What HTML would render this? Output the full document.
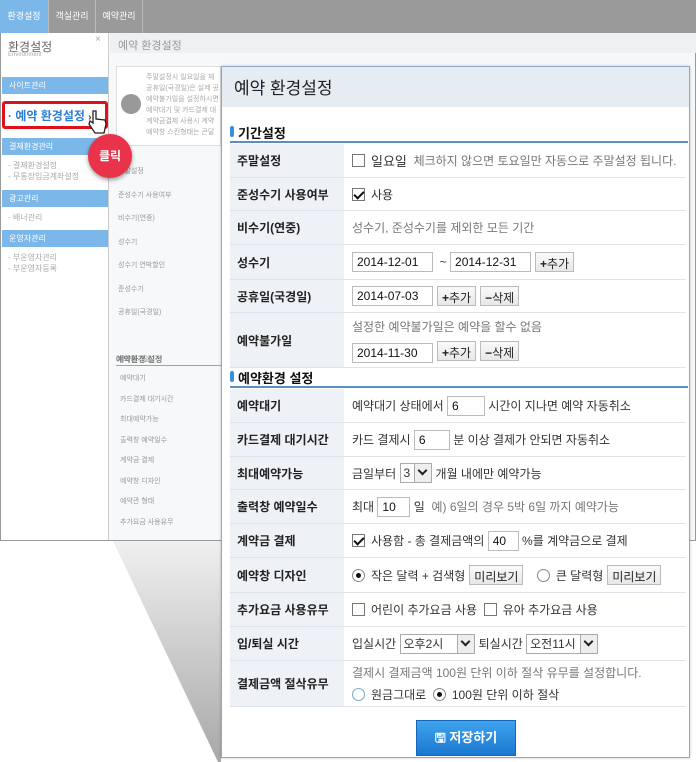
<!DOCTYPE html>
<html><head><meta charset="utf-8"><style>
*{box-sizing:border-box;margin:0;padding:0}
body{width:696px;height:762px;background:#fff;position:relative;overflow:hidden;font-family:"Liberation Sans","Noto Sans CJK KR",sans-serif;font-size:12px;color:#333}
.a{position:absolute;white-space:nowrap}
.f{color:#aaa;font-size:8px}
.pop{position:absolute;left:221px;top:66px;width:469px;height:692px;background:#fff;border:1px solid #8aa9c8;box-shadow:0 0 3px rgba(0,0,0,.2)}
.row{position:absolute;left:8px;width:456px;border-bottom:1px solid #dfe4ea}
.lab{position:absolute;left:0;top:0;bottom:0;width:114px;background:#eef2f6;font-weight:bold;font-size:12px;color:#222;padding-left:7px;display:flex;align-items:center}
.val{position:absolute;left:122px;top:0;bottom:0;right:0;display:flex;align-items:center;font-size:12px;color:#333;white-space:nowrap}
.cb{display:inline-block;width:13px;height:13px;border:1px solid #777;background:#fff;margin-right:6px;vertical-align:middle;position:relative}
.cb.on::after{content:"";position:absolute;left:3px;top:0px;width:4px;height:8px;border:solid #111;border-width:0 2px 2px 0;transform:rotate(45deg)}
.rd{display:inline-block;width:13px;height:13px;border:1px solid #888;border-radius:50%;background:#fff;margin-right:6px;position:relative}
.rd.on::after{content:"";position:absolute;left:3px;top:3px;width:5px;height:5px;border-radius:50%;background:#111}
.in{display:inline-block;height:20px;border:1px solid #bbb;padding:2px 4px;font-size:12px;color:#111;background:#fff}
.bt{display:inline-block;height:20px;border:1px solid #bbb;background:linear-gradient(#fafafa,#e8e8e8);padding:2px 4px;font-size:12px;color:#222;margin-left:4px}
.bt b{font-size:12px}
.sel{display:inline-flex;height:20px;border:1px solid #aaa;font-size:12px;align-items:center;padding-left:3px;background:#fff}
.sel i{display:inline-block;width:17px;height:18px;border-left:1px solid #aaa;background:#eee;margin-left:4px;position:relative}
.sel i::after{content:"";position:absolute;left:4px;top:3px;width:5px;height:5px;border:solid #222;border-width:0 2px 2px 0;transform:rotate(45deg)}
.sec{position:absolute;left:8px;width:458px;border-bottom:2px solid #5b8fc0;font-weight:bold;font-size:13px;color:#111;padding-left:8px;height:20px}
.sec::before{content:"";position:absolute;left:0;top:3px;width:4px;height:11px;border-radius:2px;background:#3a8de0}
.g{color:#777}
</style></head><body>
<div class="a" style="left:0;top:0;width:696px;height:541px;border:1px solid #999;background:#f7f8f9"></div>
<div class="a" style="left:0;top:0;width:696px;height:33px;background:#9a9a9a"></div>
<div class="a" style="left:0;top:0;width:48px;height:33px;background:#7bb7e8;color:#fff;font-size:9px;text-align:center;line-height:33px">환경설정</div>
<div class="a" style="left:48px;top:0;width:47px;height:33px;border-left:1px solid #bbb;color:#fff;font-size:9px;text-align:center;line-height:33px">객실관리</div>
<div class="a" style="left:95px;top:0;width:48px;height:33px;border-left:1px solid #bbb;border-right:1px solid #bbb;color:#fff;font-size:9px;text-align:center;line-height:33px">예약관리</div>
<div class="a" style="left:1px;top:33px;width:108px;height:507px;background:#fff;border-right:1px solid #ccc"></div>
<div class="a" style="left:8px;top:38px;font-size:12px;color:#666">환경설정</div>
<div class="a" style="left:8px;top:52px;font-size:6px;color:#aaa">Environment</div>
<div class="a" style="left:95px;top:34px;font-size:10px;color:#aaa">×</div>
<div class="a" style="left:2px;top:77px;width:106px;height:17px;background:#7bb7e8;color:#fff;font-size:8px;padding:3px 7px">사이트관리</div>
<div class="a" style="left:2px;top:138px;width:106px;height:17px;background:#7bb7e8;color:#fff;font-size:8px;padding:3px 7px">결제환경관리</div>
<div class="a f" style="left:8px;top:160px">- 결제환경설정<br>- 무통장입금계좌설정</div>
<div class="a" style="left:2px;top:190px;width:106px;height:17px;background:#7bb7e8;color:#fff;font-size:8px;padding:3px 7px">광고관리</div>
<div class="a f" style="left:8px;top:212px">- 배너관리</div>
<div class="a" style="left:2px;top:230px;width:106px;height:17px;background:#7bb7e8;color:#fff;font-size:8px;padding:3px 7px">운영자관리</div>
<div class="a f" style="left:8px;top:252px">- 부운영자관리<br>- 부운영자등록</div>
<div class="a" style="left:110px;top:33px;width:586px;height:20px;background:#eef0f2"></div>
<div class="a" style="left:118px;top:37px;font-size:11px;color:#999">예약 환경설정</div>
<div class="a" style="left:116px;top:66px;width:105px;height:80px;border:1px solid #ddd;background:#fff"></div>
<div class="a" style="left:121px;top:94px;width:20px;height:20px;border-radius:50%;background:#999"></div>
<div class="a f" style="left:146px;top:72px;line-height:11px;font-size:7px">주말설정시 일요일을 체<br>공휴일(국경일)은 실제 공<br>예약불가일을 설정하시면<br>예약대기 및 카드결제 대<br>계약금결제 사용시 계약<br>예약창 스킨형태는 큰달</div>
<div class="a f" style="left:118px;top:160px;line-height:23.5px;font-size:7px;color:#999">주말설정<br>준성수기 사용여부<br>비수기(연중)<br>성수기<br>성수기 연박할인<br>준성수기<br>공휴일(국경일)<br><br>예약불가일</div>
<div class="a" style="left:116px;top:354px;font-size:8px;font-weight:bold;color:#777;border-bottom:1px solid #8ab;width:105px">예약환경 설정</div>
<div class="a f" style="left:120px;top:369px;line-height:20.5px;font-size:7px;color:#999">예약대기<br>카드결제 대기시간<br>최대예약가능<br>출력창 예약일수<br>계약금 결제<br>예약창 디자인<br>예약관 형태<br>추가요금 사용유무</div>
<svg class="a" style="left:0;top:0" width="696" height="762"><defs><linearGradient id="sg" x1="0" y1="0" x2="0" y2="1"><stop offset="0" stop-color="#f0f0f0"/><stop offset="1" stop-color="#a8a8a8"/></linearGradient></defs><polygon points="113,541 221,541 221,762 218,762" fill="url(#sg)"/></svg>
<div class="a" style="left:2px;top:101px;width:106px;height:28px;border:3px solid #e0101a;background:#fff;border-radius:3px"></div>
<div class="a" style="left:8px;top:107px;font-size:12px;font-weight:bold;color:#2a7fd4">· 예약 환경설정 <span style="font-size:10px;color:#333">›</span></div>
<div class="a" style="left:88px;top:134px;width:44px;height:44px;border-radius:50%;background:#e8334a;box-shadow:0 2px 4px rgba(0,0,0,.4);color:#fff;font-size:12px;font-weight:bold;text-align:center;line-height:44px">클릭</div>
<svg class="a" style="left:86px;top:108px" width="22" height="28"><path d="M7 3 L7 15 L4 13 L3 16 L9 25 L18 25 L20 16 L19 12 L10 11 L10 3 Z" fill="#fff" stroke="#222" stroke-width="1.3"/></svg>
<div class="pop">
<div class="a" style="left:0;top:0;width:467px;height:40px;background:#e5ecf2"></div>
<div class="a" style="left:12px;top:7px;font-size:17px;color:#222">예약 환경설정</div>
<div class="sec" style="top:56px">기간설정</div>
<div class="row" style="top:77px;height:34px"><div class="lab">주말설정</div><div class="val"><span class="cb"></span><span style="font-size:13px">일요일</span>&nbsp;&nbsp;<span class="g">체크하지 않으면 토요일만 자동으로 주말설정 됩니다.</span></div></div>
<div class="row" style="top:111px;height:33px"><div class="lab">준성수기 사용여부</div><div class="val"><span class="cb on"></span>사용</div></div>
<div class="row" style="top:144px;height:34px"><div class="lab">비수기(연중)</div><div class="val g">성수기, 준성수기를 제외한 모든 기간</div></div>
<div class="row" style="top:178px;height:35px"><div class="lab">성수기</div><div class="val"><span class="in" style="width:81px">2014-12-01</span>&nbsp;&nbsp;~&nbsp;<span class="in" style="width:81px">2014-12-31</span><span class="bt"><b>+</b>추가</span></div></div>
<div class="row" style="top:213px;height:33px"><div class="lab">공휴일(국경일)</div><div class="val"><span class="in" style="width:81px">2014-07-03</span><span class="bt"><b>+</b>추가</span><span class="bt"><b>−</b>삭제</span></div></div>
<div class="row" style="top:246px;height:55px"><div class="lab">예약불가일</div><div class="val" style="flex-direction:column;align-items:flex-start;justify-content:center;gap:6px"><span class="g">설정한 예약불가일은 예약을 할수 없음</span><span><span class="in" style="width:81px">2014-11-30</span><span class="bt"><b>+</b>추가</span><span class="bt"><b>−</b>삭제</span></span></div></div>
<div class="sec" style="top:301px">예약환경 설정</div>
<div class="row" style="top:322px;height:34px"><div class="lab">예약대기</div><div class="val">예약대기 상태에서&nbsp;<span class="in" style="width:38px">6</span>&nbsp;시간이 지나면 예약 자동취소</div></div>
<div class="row" style="top:356px;height:34px"><div class="lab">카드결제 대기시간</div><div class="val">카드 결제시&nbsp;<span class="in" style="width:36px">6</span>&nbsp;분 이상 결제가 안되면 자동취소</div></div>
<div class="row" style="top:390px;height:33px"><div class="lab">최대예약가능</div><div class="val">금일부터&nbsp;<span class="sel">3 <i></i></span>&nbsp;개월 내에만 예약가능</div></div>
<div class="row" style="top:423px;height:34px"><div class="lab">출력창 예약일수</div><div class="val">최대&nbsp;<span class="in" style="width:33px">10</span>&nbsp;일&nbsp;&nbsp;<span class="g">예) 6일의 경우 5박 6일 까지 예약가능</span></div></div>
<div class="row" style="top:457px;height:34px"><div class="lab">계약금 결제</div><div class="val"><span class="cb on"></span>사용함 - 총 결제금액의&nbsp;<span class="in" style="width:31px">40</span>&nbsp;%를 계약금으로 결제</div></div>
<div class="row" style="top:491px;height:35px"><div class="lab">예약창 디자인</div><div class="val"><span class="rd on"></span>작은 달력 + 검색형<span class="bt">미리보기</span>&nbsp;&nbsp;&nbsp;&nbsp;<span class="rd"></span>큰 달력형<span class="bt">미리보기</span></div></div>
<div class="row" style="top:526px;height:34px"><div class="lab">추가요금 사용유무</div><div class="val"><span class="cb"></span>어린이 추가요금 사용&nbsp;&nbsp;<span class="cb"></span>유아 추가요금 사용</div></div>
<div class="row" style="top:560px;height:34px"><div class="lab">입/퇴실 시간</div><div class="val">입실시간&nbsp;<span class="sel">오후2시 &nbsp;&nbsp;<i></i></span>&nbsp;퇴실시간&nbsp;<span class="sel">오전11시<i></i></span></div></div>
<div class="row" style="top:594px;height:46px"><div class="lab">결제금액 절삭유무</div><div class="val" style="flex-direction:column;align-items:flex-start;justify-content:center;gap:5px"><span class="g">결제시 결제금액 100원 단위 이하 절삭 유무를 설정합니다.</span><span style="display:flex;align-items:center"><span class="rd" style="border-color:#7ab"></span>원금그대로&nbsp;&nbsp;<span class="rd on"></span>100원 단위 이하 절삭</span></div></div>
<div class="a" style="left:194px;top:653px;width:100px;height:36px;background:linear-gradient(#3fa3ee,#1a78d0);border:1px solid #1565b8;color:#fff;font-weight:bold;font-size:13px;text-align:center;line-height:34px">🖫 저장하기</div>
</div>
</body></html>
